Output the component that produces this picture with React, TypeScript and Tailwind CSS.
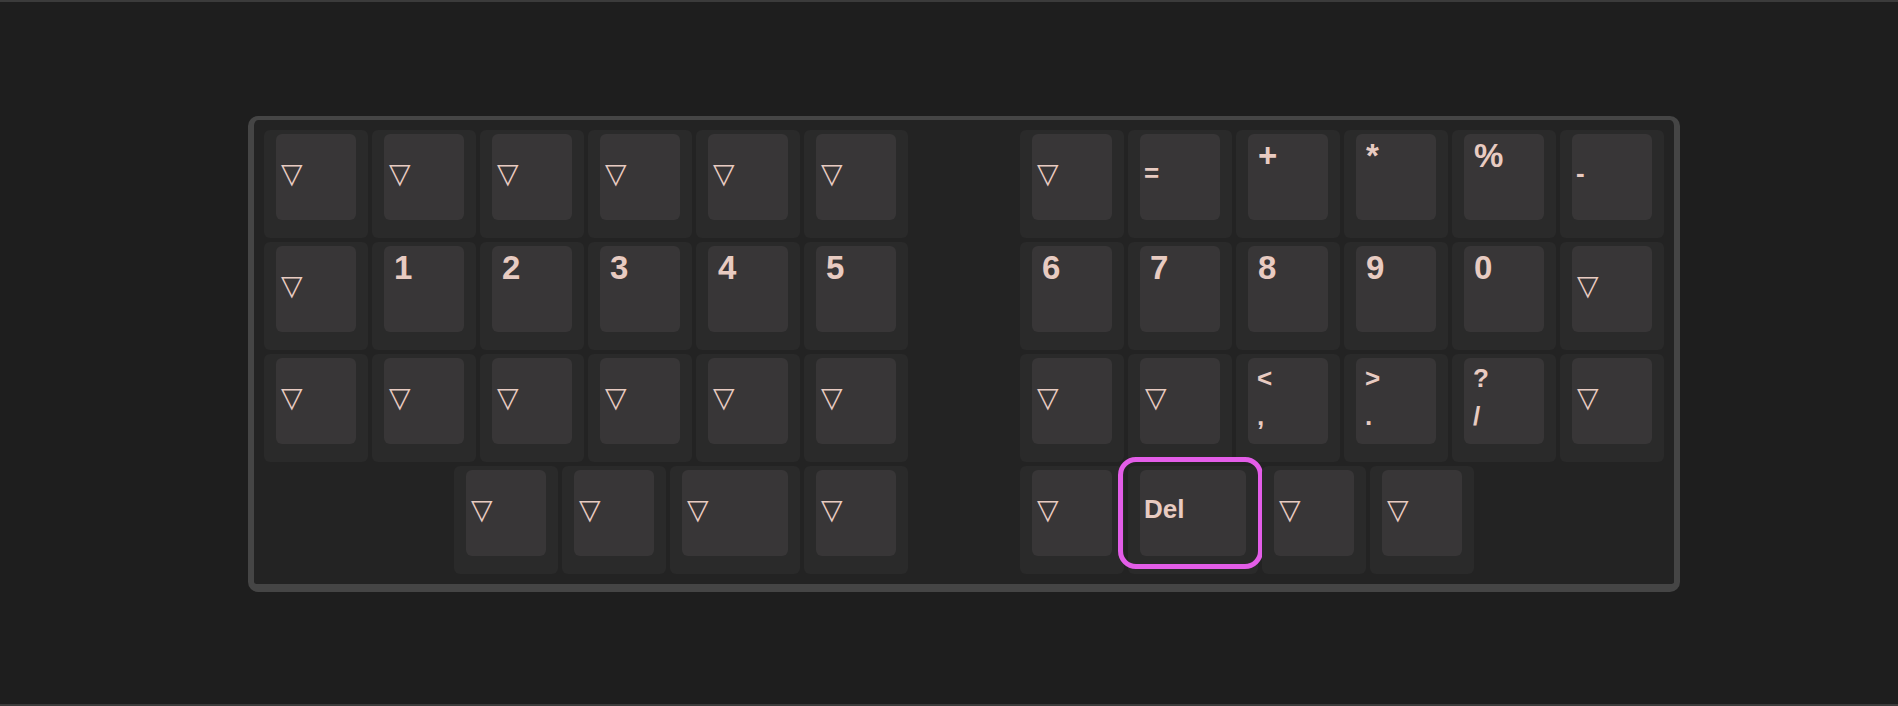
import type { ReactNode } from 'react';

type Legend =
  | { kind: 'tri' }
  | { kind: 'center'; text: string }
  | { kind: 'top'; text: string }
  | { kind: 'pair'; top: string; bottom: string };

type KeyDef = { legend: Legend; wide?: boolean; active?: boolean };

const tri: KeyDef = { legend: { kind: 'tri' } };
const center = (text: string, extra: Partial<KeyDef> = {}): KeyDef => ({ legend: { kind: 'center', text }, ...extra });
const top = (text: string): KeyDef => ({ legend: { kind: 'top', text } });
const pair = (t: string, b: string): KeyDef => ({ legend: { kind: 'pair', top: t, bottom: b } });

const leftRows: KeyDef[][] = [
  [tri, tri, tri, tri, tri, tri],
  [tri, top('1'), top('2'), top('3'), top('4'), top('5')],
  [tri, tri, tri, tri, tri, tri],
  [tri, tri, { legend: { kind: 'tri' }, wide: true }, tri],
];

const rightRows: KeyDef[][] = [
  [tri, center('='), top('+'), top('*'), top('%'), center('-')],
  [top('6'), top('7'), top('8'), top('9'), top('0'), tri],
  [tri, tri, pair('<', ','), pair('>', '.'), pair('?', '/'), tri],
  [tri, center('Del', { wide: true, active: true }), tri, tri],
];

function LegendView({ legend }: { legend: Legend }) {
  if (legend.kind === 'tri') {
    return (
      <div className="flex h-full items-center pb-[7px] pl-[5px]">
        <span className="font-['DejaVu_Sans'] text-[28px] leading-none font-normal">▽</span>
      </div>
    );
  }
  if (legend.kind === 'center') {
    return <div className="flex h-full items-center pb-[7px] pl-[4px] text-[26px] font-bold">{legend.text}</div>;
  }
  if (legend.kind === 'top') {
    return <div className="pt-[5px] pl-[10px] text-[33px] leading-none font-bold">{legend.text}</div>;
  }
  return (
    <div className="flex flex-col gap-[12px] pt-[7px] pl-[9px] text-[26px] leading-none font-bold">
      <span>{legend.top}</span>
      <span>{legend.bottom}</span>
    </div>
  );
}

function Key({ k }: { k: KeyDef }) {
  return (
    <div
      className={`relative h-[108px] shrink-0 rounded-[6px] bg-[#2a2a2a] pt-[4px] px-[12px] pb-[18px] ${
        k.wide ? 'w-[130px]' : 'w-[104px]'
      }`}
    >
      <div className="h-full w-full rounded-[6px] bg-[#383637]">
        <LegendView legend={k.legend} />
      </div>
      {k.active && (
        <div className="absolute left-[-10px] top-[-9px] h-[112px] w-[145px] rounded-[18px] border-[5px] border-[#e35de8]" />
      )}
    </div>
  );
}

function Half({ rows, align }: { rows: KeyDef[][]; align: 'left' | 'right' }): ReactNode {
  return (
    <div className="flex w-[644px] flex-col gap-[4px]">
      {rows.map((row, i) => (
        <div key={i} className={`flex gap-[4px] ${align === 'right' ? 'justify-end' : 'justify-start'}`}>
          {row.map((k, j) => (
            <Key key={j} k={k} />
          ))}
        </div>
      ))}
    </div>
  );
}

export default function App() {
  return (
    <div className="h-[706px] w-full overflow-hidden border-y-2 border-[#3b3b3b] bg-[#1e1e1e] font-['Liberation_Sans',Arial,sans-serif] text-[#e8cbc1]">
      <div className="pt-[114px] pl-[248px]">
        <div className="flex h-[476px] w-[1432px] justify-between rounded-[10px] border-t-[4px] border-x-[6px] border-b-[8px] border-[#454545] bg-[#232323] p-[10px]">
          <Half rows={leftRows} align="right" />
          <Half rows={rightRows} align="left" />
        </div>
      </div>
    </div>
  );
}
